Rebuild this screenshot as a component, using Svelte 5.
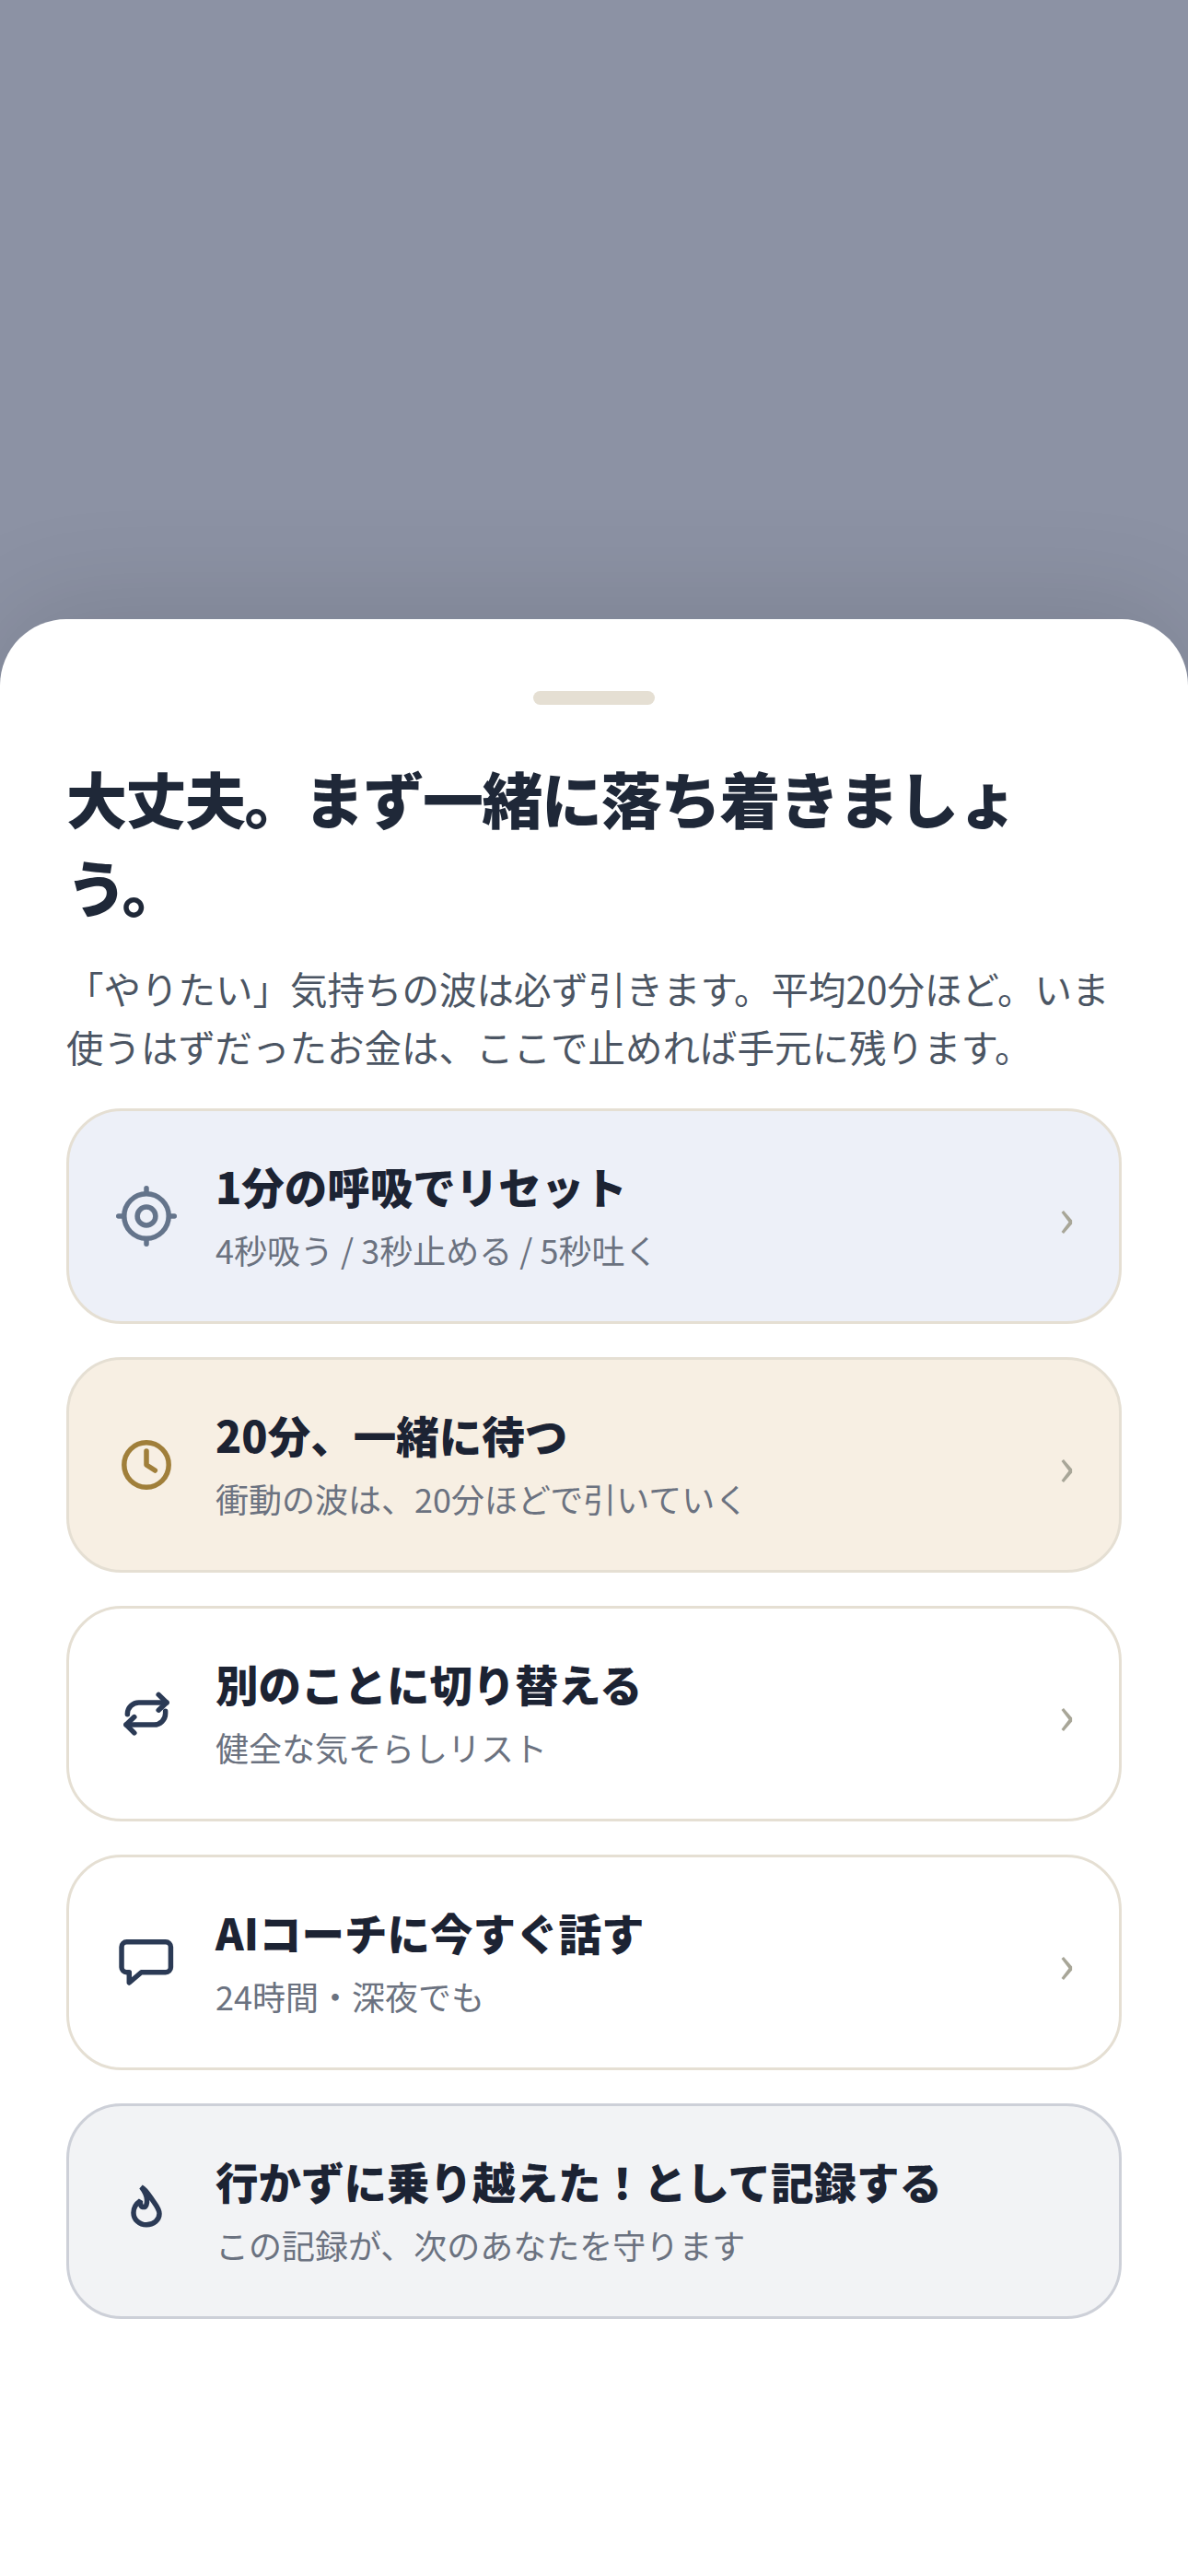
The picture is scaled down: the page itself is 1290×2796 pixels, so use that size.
<script>
  const options = [
    { title: '1分の呼吸でリセット', sub: '4秒吸う / 3秒止める / 5秒吐く', tone: 'blue', icon: 'target', chevron: true },
    { title: '20分、一緒に待つ', sub: '衝動の波は、20分ほどで引いていく', tone: 'sand', icon: 'clock', chevron: true },
    { title: '別のことに切り替える', sub: '健全な気そらしリスト', tone: 'plain', icon: 'repeat', chevron: true },
    { title: 'AIコーチに今すぐ話す', sub: '24時間・深夜でも', tone: 'plain', icon: 'chat', chevron: true },
    { title: '行かずに乗り越えた！として記録する', sub: 'この記録が、次のあなたを守ります', tone: 'gray', icon: 'flame', chevron: false }
  ];
</script>

<div class="overlay">
  <section class="sheet">
    <div class="handle"></div>
    <h1>大丈夫。まず一緒に落ち着きましょう。</h1>
    <p class="lead">「やりたい」気持ちの波は必ず引きます。平均20分ほど。いま使うはずだったお金は、ここで止めれば手元に残ります。</p>

    <div class="options">
      {#each options as opt}
        <button class="option {opt.tone}">
          <span class="icon {opt.icon}">
            <svg viewBox="0 0 24 24" width="66" height="66" fill="none" stroke="currentColor" stroke-width="2" stroke-linecap="round" stroke-linejoin="round">
              {#if opt.icon === 'target'}
                <circle cx="12" cy="12" r="8.8" />
                <circle cx="12" cy="12" r="3.6" />
                <path d="M12 1v2M12 21v2M1 12h2M21 12h2" />
              {:else if opt.icon === 'clock'}
                <circle cx="12" cy="12" r="8.8" />
                <path d="M12 6.5V12l3.4 2.2" />
              {:else if opt.icon === 'repeat'}
                <path d="M16.800 4.500L20 7.600l-3.200 3" />
                <path d="M4.500 12.300V12A4.500 4.500 0 0 1 9 7.600h11" />
                <path d="M7.200 13.300L4 16.400l3.200 3.200" />
                <path d="M19.500 11v.9a4.500 4.500 0 0 1-4.500 4.500H4" />
              {:else if opt.icon === 'chat'}
                <path d="M4.200 3.900h15.400a2 2 0 0 1 2 2v8a2 2 0 0 1-2 2H10L5.200 20v-4.100h-1a2 2 0 0 1-2-2v-8a2 2 0 0 1 2-2z" />
              {:else}
                <path stroke-linejoin="bevel" d="M10 2.500C12 3.500 13.500 6.500 15 8.500 16.300 10.300 17.100 11.500 17.100 13 17.100 15.500 14.800 17.400 12 17.400 9.200 17.400 6.900 15.300 6.900 12.600 6.900 10.600 8 9 9.600 7.900 9.400 9.500 10 10.400 10.900 10.400 11.900 10.400 12.300 9 12.200 7.500 12.100 5.500 11 3.800 10 2.500Z" />
              {/if}
            </svg>
          </span>
          <span class="text">
            <span class="title">{opt.title}</span>
            <span class="sub">{opt.sub}</span>
          </span>
          {#if opt.chevron}
            <span class="chev">›</span>
          {/if}
        </button>
      {/each}
    </div>
  </section>
</div>

<style>
  :global(body) {
    margin: 0;
    background: #8c92a4;
  }

  .overlay {
    height: 2796px;
    display: flex;
    flex-direction: column;
    justify-content: flex-end;
    font-family: "Noto Sans CJK JP", "Noto Sans", sans-serif;
  }

  .sheet {
    height: 2124px;
    box-sizing: border-box;
    background: #fff;
    border-radius: 72px 72px 0 0;
    padding: 78px 72px 0;
    box-shadow: 0 -12px 120px rgba(0, 0, 0, 0.12);
  }

  .handle {
    width: 132px;
    height: 15px;
    margin: 0 auto 52px;
    border-radius: 8px;
    background: #e5dfd3;
  }

  h1 {
    margin: 0 0 32px;
    font-size: 66px;
    line-height: 96px;
    font-weight: 900;
    letter-spacing: -1.5px;
    color: #1f2838;
  }

  .lead {
    margin: 0 0 36px;
    font-size: 40.5px;
    line-height: 63px;
    color: #4b5563;
  }

  .options {
    display: flex;
    flex-direction: column;
    gap: 36px;
  }

  .option {
    display: flex;
    align-items: center;
    height: 234px;
    box-sizing: border-box;
    padding: 0 48px;
    border: 3px solid #e5dfd3;
    border-radius: 60px;
    background: #fff;
    font-family: inherit;
    text-align: left;
  }

  .option.blue {
    background: #edf0f8;
  }

  .option.sand {
    background: #f7efe3;
  }

  .option.gray {
    background: #f2f3f5;
    border-color: #cdd0d8;
  }

  .icon {
    display: flex;
    justify-content: center;
    width: 72px;
    margin-right: 39px;
    color: #2b3a55;
  }

  .icon.target {
    color: #64748b;
  }

  .icon.clock {
    color: #a07f3a;
  }

  .text {
    flex: 1;
    display: flex;
    flex-direction: column;
    gap: 9px;
    padding-bottom: 4px;
  }

  .title {
    font-size: 46.5px;
    line-height: 66px;
    font-weight: 900;
    color: #1c2333;
  }

  .sub {
    font-size: 36px;
    line-height: 54px;
    color: #6b7280;
  }

  .chev {
    margin-bottom: 6px;
    font-size: 60px;
    line-height: 1;
    color: #a8a698;
  }
</style>
